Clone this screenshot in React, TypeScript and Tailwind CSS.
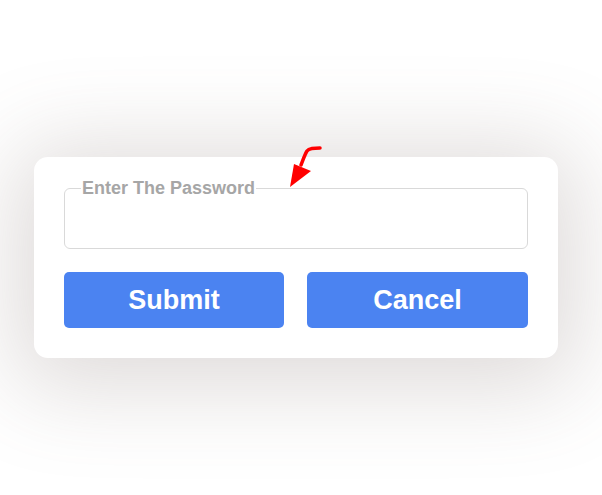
import React from "react";

export default function App() {
  return (
    <div className="w-[602px] h-[495px] bg-white overflow-hidden relative" style={{ fontFamily: '"Liberation Sans", Arial, sans-serif' }}>
      <div className="pt-[157px] pl-[34px]">
        <div className="w-[524px] h-[201px] bg-white rounded-[14px] shadow-[0_10px_90px_20px_rgba(110,90,85,0.22)] px-[30px] pt-[21px]">
          <fieldset className="border border-[#d9d9d9] rounded-[6px] h-[71px] pl-[16px] pr-[12px] m-0">
            <legend className="px-[1px] text-[18px] font-bold text-[#a6a6a6] leading-[20px]">Enter The Password</legend>
          </fieldset>
          <div className="flex gap-[23px] mt-[23px]">
            <button className="w-[220px] h-[56px] rounded-[5px] bg-[#4b83f1] text-white text-[27px] font-bold">Submit</button>
            <button className="w-[221px] h-[56px] rounded-[5px] bg-[#4b83f1] text-white text-[27px] font-bold">Cancel</button>
          </div>
        </div>
      </div>
      <svg className="absolute left-[280px] top-[140px]" width="50" height="55" viewBox="0 0 50 55">
        <path d="M40 8 C34 8 29 8 27 11 C25 14 23 20 21 25" stroke="#ff0000" strokeWidth="3.5" fill="none" strokeLinecap="round" />
        <path d="M14 24 L31 31 L10 47 Z" fill="#ff0000" />
      </svg>
    </div>
  );
}
